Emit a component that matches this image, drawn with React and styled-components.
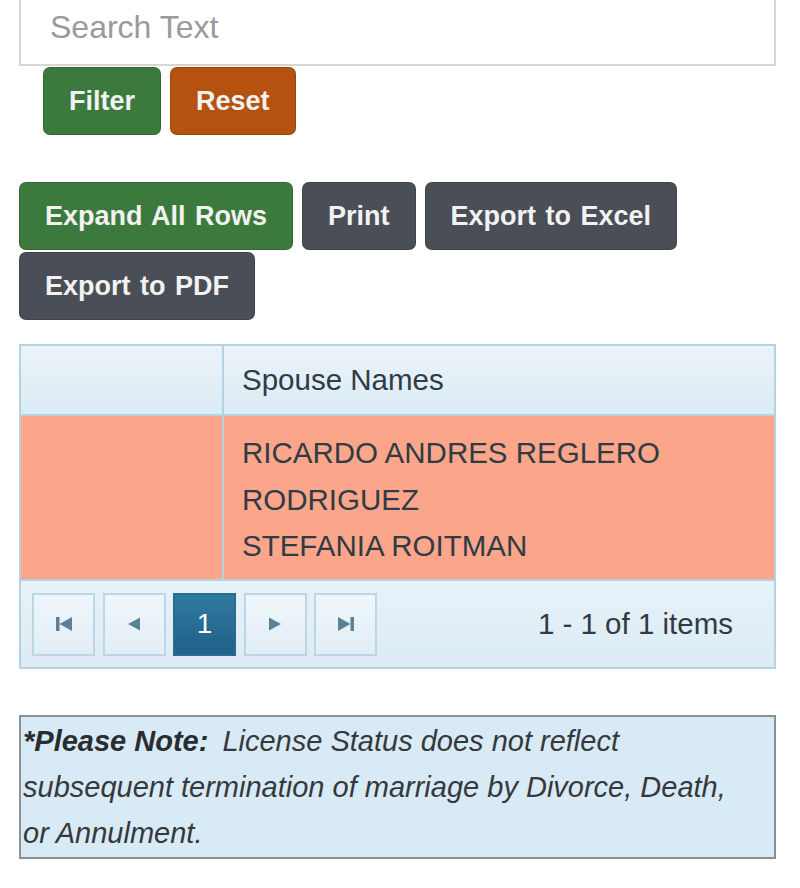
import React from 'react'
import styled, { createGlobalStyle } from 'styled-components';

const GlobalStyle = createGlobalStyle`
  body {
    margin: 0;
    background: #fff;
    font-family: "Liberation Sans", Arial, sans-serif;
  }
`;

function PagerIcon({ kind }) {
    const fill = "#5b8097";
    if (kind === "first") {
        return (
            <svg width="18" height="16" viewBox="0 0 18 16">
                <rect x="1" y="1" width="3.5" height="14" fill={fill} />
                <polygon points="17,1 17,15 4.5,8" fill={fill} />
            </svg>
        );
    }
    if (kind === "prev") {
        return (
            <svg width="16" height="16" viewBox="0 0 16 16">
                <polygon points="14,1.5 14,14.5 2,8" fill={fill} />
            </svg>
        );
    }
    if (kind === "next") {
        return (
            <svg width="16" height="16" viewBox="0 0 16 16">
                <polygon points="2,1.5 2,14.5 14,8" fill={fill} />
            </svg>
        );
    }
    return (
        <svg width="18" height="16" viewBox="0 0 18 16">
            <polygon points="1,1 1,15 13.5,8" fill={fill} />
            <rect x="13.5" y="1" width="3.5" height="14" fill={fill} />
        </svg>
    );
}

function App() {
    const names = ["RICARDO ANDRES REGLERO RODRIGUEZ", "STEFANIA ROITMAN"];

  return (
    <Page>
        <GlobalStyle />
        <SearchBox placeholder="Search Text" />
        <FilterRow>
            <Button $variant="green">Filter</Button>
            <Button $variant="orange">Reset</Button>
        </FilterRow>

        <Toolbar>
            <Button $variant="green">Expand All Rows</Button>
            <Button $variant="dark">Print</Button>
            <Button $variant="dark">Export to Excel</Button>
            <Button $variant="dark">Export to PDF</Button>
        </Toolbar>

        <Grid>
            <HeaderCell />
            <HeaderCell $text>Spouse Names</HeaderCell>
            <DataCell />
            <DataCell $text>
                {names.map((n) => (
                    <div key={n}>{n}</div>
                ))}
            </DataCell>
            <Pager>
                <PageButtons>
                    <PageButton><PagerIcon kind="first" /></PageButton>
                    <PageButton><PagerIcon kind="prev" /></PageButton>
                    <PageButton $active>1</PageButton>
                    <PageButton><PagerIcon kind="next" /></PageButton>
                    <PageButton><PagerIcon kind="last" /></PageButton>
                </PageButtons>
                <PagerInfo>1 - 1 of 1 items</PagerInfo>
            </Pager>
        </Grid>

        <Note>
            <b>*Please Note:</b> License Status does not reflect subsequent termination of marriage by Divorce, Death, or Annulment.
        </Note>
    </Page>
  );
}

const Page = styled.div`
  width: 757px;
  margin: -12px 0 0 19px;
  padding-bottom: 30px;
`;

const SearchBox = styled.input`
  display: block;
  box-sizing: border-box;
  width: 100%;
  height: 78px;
  padding: 0 29px;
  border: 2px solid #d6d6d6;
  font-family: "Liberation Sans", Arial, sans-serif;
  font-size: 32px;
  color: #333;
  outline: none;

  &::placeholder {
    color: #9a9a9a;
  }
`;

const FilterRow = styled.div`
  display: flex;
  gap: 9px;
  margin: 1px 0 0 24px;
`;

const colors = {
  green: "#3b7a3c",
  orange: "#b5520f",
  dark: "#4a4e56",
};

const Button = styled.button`
  height: 68px;
  padding: 0 25px;
  border: 1px solid rgba(0, 0, 0, 0.15);
  border-radius: 7px;
  background: ${(p) => colors[p.$variant]};
  color: #f2f2f2;
  font-family: "Liberation Sans", Arial, sans-serif;
  font-size: 27px;
  font-weight: 700;
  word-spacing: 2px;
  cursor: pointer;
`;

const Toolbar = styled.div`
  display: flex;
  flex-wrap: wrap;
  column-gap: 9px;
  row-gap: 2px;
  margin-top: 47px;
`;

const Grid = styled.div`
  display: grid;
  grid-template-columns: 201px 1fr;
  margin-top: 24px;
  border: 2px solid #b4d3e2;
  color: #2f3b45;
  font-size: 29.5px;
`;

const HeaderCell = styled.div`
  height: 70px;
  box-sizing: border-box;
  padding: 0 18px;
  display: flex;
  align-items: center;
  background: linear-gradient(#eaf3f9, #dcebf4);
  border-bottom: 2px solid #b4d3e2;
  ${(p) => p.$text && "border-left: 2px solid #b4d3e2;"}
`;

const DataCell = styled.div`
  height: 165px;
  box-sizing: border-box;
  padding: 14px 18px 0;
  line-height: 46.5px;
  background: #fba68a;
  border-bottom: 2px solid #b4d3e2;
  ${(p) => p.$text && "border-left: 2px solid #b4d3e2;"}
`;

const Pager = styled.div`
  grid-column: 1 / -1;
  height: 86px;
  box-sizing: border-box;
  padding: 0 41px 0 11px;
  display: flex;
  align-items: center;
  justify-content: space-between;
  background: linear-gradient(#e7f2f9, #dcebf4);
`;

const PageButtons = styled.div`
  display: flex;
  gap: 7.5px;
`;

const PageButton = styled.div`
  width: 63px;
  height: 63px;
  box-sizing: border-box;
  display: flex;
  align-items: center;
  justify-content: center;
  border: 2px solid ${(p) => (p.$active ? "#2a6a8f" : "#bed6e3")};
  background: ${(p) =>
    p.$active ? "linear-gradient(#2f7aa1, #1f6087)" : "linear-gradient(#eef6fb, #e2eef5)"};
  color: #fff;
  font-size: 28px;

  svg {
    flex-shrink: 0;
  }
`;

const PagerInfo = styled.div`
  font-size: 29.5px;
`;

const Note = styled.div`
  margin-top: 46px;
  padding: 1px 30px 1px 2px;
  border: 2px solid #8a9196;
  background: #d8eaf6;
  color: #36393c;
  font-size: 29px;
  font-style: italic;
  line-height: 46px;

  b {
    font-weight: 700;
    color: #2a2d30;
    margin-right: 6px;
  }
`;

export default App;
